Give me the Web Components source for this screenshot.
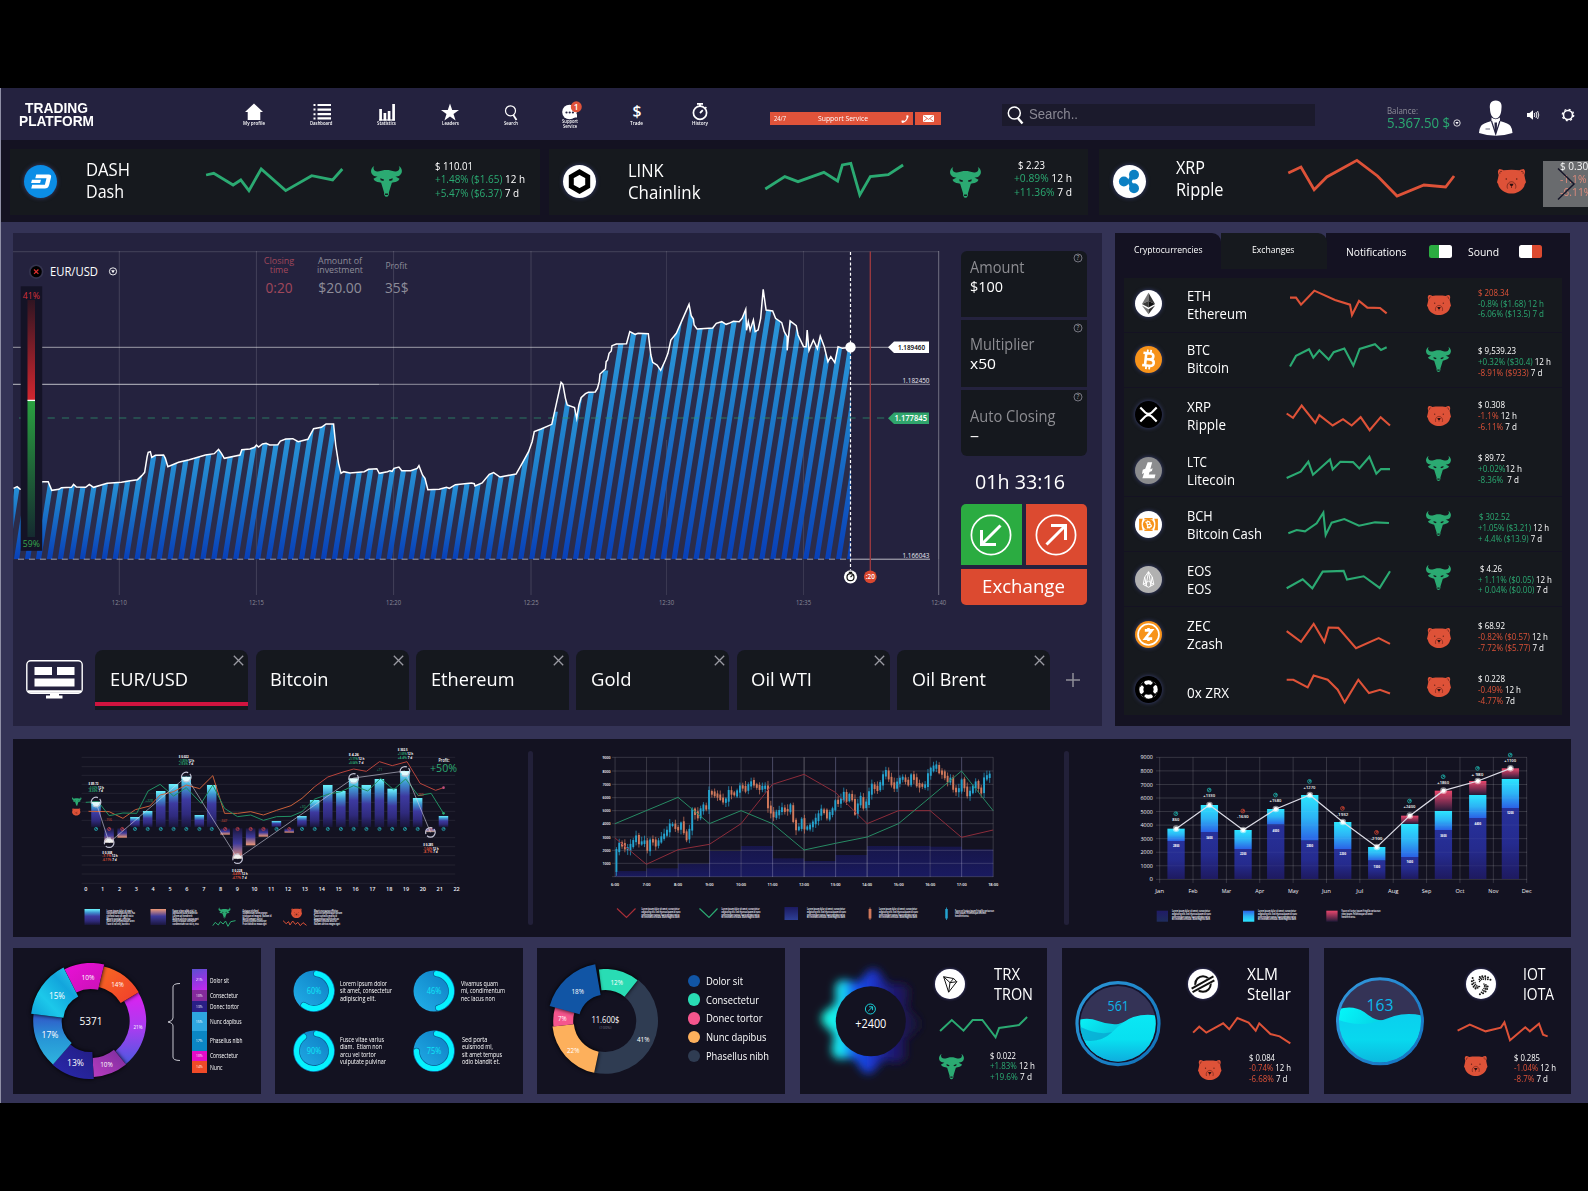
<!DOCTYPE html>
<html lang="en">
<head>
<meta charset="utf-8">
<title>Trading Platform</title>
<style>
html,body{margin:0;padding:0;background:#000}
body{font-family:"Open Sans","Noto Sans",sans-serif;color:#fff;width:1588px;height:1191px;overflow:hidden}
</style>
</head>
<body>
<trading-app></trading-app>
<script>
const G='#2baa72',R='#de5238',GREY='#8e8d99';
const BASE='*{box-sizing:border-box}svg{display:block;overflow:visible;flex:none}';
/* ---------- helpers ---------- */
const fit=(t,w,s,l,style='')=>`<fit-text w="${w}" s="${s}" l="${l}" style="${style}">${t}</fit-text>`;
const top_=(base,y0,s,l)=>(base-y0-(l/2+0.388*s)).toFixed(2);
const T=(x,y,t,s,w,fill='#fff',a='start',extra='')=>`<text x="${x}" y="${y}" font-size="${s}" fill="${fill}" text-anchor="${a}" ${w?`textLength="${w}" lengthAdjust="spacingAndGlyphs"`:''} ${extra}>${t}</text>`;
const pairs=s=>s.trim().split(/\s+/).map(p=>p.split(',').map(Number));
const mapper=(kx,ox,oy)=>(x,y)=>[+(ox+x/kx).toFixed(2),+(oy+y/3).toFixed(2)];
const line=(m,s,stroke,w=1,extra='')=>`<polyline points="${pairs(s).map(p=>m(...p).join(',')).join(' ')}" fill="none" stroke="${stroke}" stroke-width="${w}" ${extra}/>`;

const bull=(w,h,c=G,bg='#16191e')=>`<svg width="${w}" height="${h}" viewBox="0 0 30 31" preserveAspectRatio="none"><path fill="${c}" d="M3.2 0C1.6 2 2.6 5.2 6 5.4c2 .2 3.600-.6 5-.9 2.500-.6 5.500-.6 8 0 1.400.3 3 1.100 5 .9 3.400-.2 4.400-3.400 2.800-5.400 3.400 1.600 4.400 6.600 1.200 9.200-1.300 1-3 1.300-4.400 1.300l4 2.200c-.6 2.200-3.400 3.300-5.400 3.500l-2 .6-2.900 9.600c.4 1.800-.5 4.300-2.300 4.300s-2.700-2.500-2.300-4.300L9.800 16.800l-2-.6c-2-.2-4.800-1.300-5.400-3.500l4-2.200C5 10.500 3.300 10.200 2 9.200-1.200 6.600-.2 1.600 3.200 0z"/><path fill="${bg}" d="M9 12.200l3.600 1.400-.6 1.400-2.700-.8zM21 12.200l-3.600 1.400.6 1.400 2.700-.8zM13.600 27.500h2.800v1.500h-2.800z"/></svg>`;
const bear=(w,h,c=R,bg='#5b1f18')=>`<svg width="${w}" height="${h}" viewBox="0 0 30 25" preserveAspectRatio="none"><path fill="${c}" d="M2.600 0C4 .1 5.600.5 6.600 1.300 11.500.6 18.500.6 23.400 1.300 24.400.5 26 .1 27.400 0c2 1 2 3.600.9 6 .6 2.400.9 5 1.700 7.500-1 1.200-1.400 2.400-1.800 4C25.500 22.500 20 25 15 25S4.500 22.500 1.800 17.500C1.400 15.900 1 14.700 0 13.500.8 11 1.100 8.400 1.700 6 .6 3.600.6 1 2.600 0z"/><g fill="none" stroke="${bg}" stroke-width=".7"><path d="M3 5C2.500 3 3.500 1.800 5.200 2.600M27 5c.5-2-.5-3.200-2.200-2.400M11 20c-1.500-3 .5-7 4-7s5.500 4 4 7"/></g><path fill="#2a0f10" d="M12.800 15h4.400l-1.300 2.400h-1.800z"/><path fill="#2a0f10" d="M14.700 17.400h.6v2h-.6z"/><circle cx="9.600" cy="10.200" r=".8" fill="${bg}"/><circle cx="20.400" cy="10.200" r=".8" fill="${bg}"/></svg>`;
const animal=(k,w,h)=>k=='bull'?bull(w,h):bear(w,h);

const LOGO={
DASH:`<circle r="16.500" fill="#0b8de6"/><g transform="skewX(-14)"><path d="M-6-7H6.500Q9.500-7 9.500-4V3.500Q9.500 7 6 7H-7.500V3.200H5.200V-3.200H-6z" fill="#fff"/><path d="M-9-1.800H0V1.600H-9z" fill="#fff"/></g>`,
LINK:`<circle r="16.500" fill="#fff"/><path d="M0-9.500L8.200-4.800V4.800L0 9.500-8.200 4.800V-4.800z" fill="none" stroke="#000" stroke-width="5" stroke-linejoin="miter"/>`,
RIPPLE:`<circle r="16.500" fill="#fff"/><g fill="#0c80c3"><circle cx="-5.600" cy="0" r="5"/><circle cx="4.500" cy="-6.800" r="5"/><circle cx="4.500" cy="6.800" r="5"/></g><path d="M-5.600 0H0L3 -6M0 0L3 6" stroke="#0c80c3" stroke-width="4" fill="none"/>`,
ETH:`<circle r="16.500" fill="#fff"/><path d="M0-13L-8 .5 0-3z" fill="#777"/><path d="M0-13L8 .5 0-3z" fill="#333"/><path d="M0-3L-8 .5 0 5z" fill="#3c3c3b"/><path d="M0-3L8 .5 0 5z" fill="#111"/><path d="M-8 2.500L0 13V7z" fill="#777"/><path d="M8 2.500L0 13V7z" fill="#333"/>`,
BTC:`<circle r="16.500" fill="#f7931a"/><g transform="rotate(6)" fill="none" stroke="#fff"><path d="M-3.500-8V8M-7-7.500H1.500Q5.500-7.500 5.500-4T1.500-.3H-3.500M1.500-.3Q6.800-.3 6.800 3.700T1.500 7.500H-7" stroke-width="3.200"/><path d="M-2-12V-8M2-12V-8M-2 8V12M2 8V12" stroke-width="2.200"/></g>`,
XRP:`<circle r="16.500" fill="#000"/><g fill="none" stroke="#fff" stroke-width="2.600"><path d="M-10-8.500L-4-2.500Q0 1 4-2.500L10-8.500M-10 8.500L-4 2.500Q0-1 4 2.500L10 8.500"/></g>`,
LTC:`<circle r="16.500" fill="#8b8c8e"/><path d="M-1-10H4.500L2.200-1.500 5-2.700 4.200.6 1.300 1.800.4 5H8.500L7.400 9.500H-7.500L-5.400 3.200-8 4.200-7-.8-4-2z" fill="#fff"/>`,
BCH:`<circle r="16.500" fill="#fff"/><path d="M-11.500-7H-7Q-10 0-7 7H-11.500zM11.500-7H7Q10 0 7 7H11.500z" fill="#f7931a"/><circle r="6.800" fill="#f7931a"/><path d="M-5-7H5M-5 7H5" stroke="#f7931a" stroke-width="1.600"/><g transform="rotate(-14)" fill="none" stroke="#fff" stroke-width="1.500"><path d="M-1.500-3.500V3.500M-3-3.500H.6Q2.300-3.500 2.300-1.800T.6 0H-1.500M.6 0Q3 0 3 1.800T.6 3.500H-3M0-5V-3.500M0 3.500V5"/></g>`,
EOS:`<circle r="16.500" fill="#b1b1b1"/><g fill="none" stroke="#fff" stroke-width="1.200"><path d="M0-9.500L-4.600-3-6.500 6 0 9.500 6.500 6 4.600-3zM0-9.500L-3 7.500M0-9.500L3 7.500M-4.600-3L-2.500 8M4.600-3L2.500 8M-6.500 6L0 2 6.500 6"/></g>`,
ZEC:`<circle r="16.500" fill="#f7931a"/><circle r="12.800" fill="none" stroke="#fff" stroke-width="2"/><path d="M-4.500-5H4L-4 5H4.500M0-8V-5M0 5V8" fill="none" stroke="#fff" stroke-width="3.200"/>`,
ZRX:`<circle r="16.500" fill="#000"/><circle r="8.800" fill="none" stroke="#fff" stroke-width="5"/><g fill="#000"><circle r="5"/></g><path d="M-7.500-7.500L7.500 7.500M7.500-7.500L-7.500 7.500" stroke="#000" stroke-width="3.600"/><path d="M-10.500-3.500L-5-10M3.500-10.500L10-5M10.500 3.500L5 10M-3.500 10.500L-10 5" stroke="#000" stroke-width="1.300"/>`,
TRX:`<circle r="16.500" fill="#fff"/><path d="M-7-8L4-6 7.500-2.500-1.500 9zM-7-8L0-1.500-1.500 9M0-1.500L7.500-2.500M0-1.500L4-6" fill="none" stroke="#111" stroke-width="1.100"/>`,
XLM:`<circle r="16.500" fill="#fff"/><circle r="8.500" fill="none" stroke="#111" stroke-width="2.200"/><path d="M-12 7L12-6" stroke="#fff" stroke-width="7"/><path d="M-12.500 5L11.500-8.500M-11.500 9L12.500-4" stroke="#111" stroke-width="2.200"/>`,
IOT:`<circle r="16.500" fill="#fff"/><g fill="#151515">${(()=>{let s='';for(let a=0;a<3;a++)for(let j=0;j<3;j++)for(let i=0;i<5;i++){const t=a*2.094+i*.33+j*.18,r=3.200+j*2.300+i*.9;s+=`<circle cx="${(Math.cos(t)*r).toFixed(1)}" cy="${(Math.sin(t)*r).toFixed(1)}" r="${(.8+j*.16).toFixed(2)}"/>`}return s})()}</g>`};
const logo=(k,r)=>`<svg class="logo" width="${2*r}" height="${2*r}" viewBox="-16.500 -16.500 33 33">${LOGO[k]}</svg>`;
const caret=`<svg width="8" height="8" viewBox="-5 -5 10 10"><circle r="4" fill="none" stroke="#fff" stroke-width="1"/><path d="M-2-1.200H2L0 2z" fill="#fff"/></svg>`;
const g=t=>`<span style="color:${G}">${t}</span>`, r=t=>`<span style="color:${R}">${t}</span>`;

/* ---------- text stretched to a given run width ---------- */
customElements.define('fit-text',class extends HTMLElement{
 connectedCallback(){
  const w=+this.getAttribute('w'),s=this.getAttribute('s'),l=this.getAttribute('l');
  if(!this.shadowRoot){this.attachShadow({mode:'open'}).innerHTML=`<style>:host{display:block;flex:none;width:${w}px;height:${l}px;line-height:${l}px;font-size:${s}px;white-space:pre}span{display:inline-block;transform-origin:0 50%}</style><span><slot></slot></span>`;}
  const sp=this.shadowRoot.querySelector('span');const n=sp.getBoundingClientRect().width;
  if(n)sp.style.transform=`scaleX(${w/n})`;
 }});

/* ---------- one currency line: logo, name, sparkline, mood, prices ---------- */
const COINS={
dash:{o:[10,149],logo:'DASH',lc:[40.300,181.300,16.500],nx:86.200,names:[['DASH',44,175.700],['Dash',38,197.700]],ns:17.500,sp:[1.960,0,80,395,240,285,110,'403,285 418,280 456,315 471,300 487,332 511,267 559,332 610,287 651,300 670,267'],an:['bull',371.500,166,31,31],px:435.500,ps:10.500,prices:[['$ 110.01',38,170.700],[g('+1.48% ($1.65)')+' 12 h',90,183.900],[g('+5.47% ($6.37)')+' 7 d',84,197.500]]},
link:{o:[549,149],logo:'LINK',lc:[579.600,181.300,16.500],nx:628,names:[['LINK',35.500,176.700],['Chainlink',72.500,198.700]],ns:17.500,sp:[1.894,760,80,0,240,285,110,'10,327 47,290 72,305 121,277 147,303 156,255 172,250 189,345 209,290 243,284 271,255'],an:['bull',950,167,31,31],px:1014.500,ps:10.500,prices:[['$ 2.23',27,169.800,3.500],[g('+0.89%')+' 12 h',58,183],[g('+11.36%')+' 7 d',58,196.700]]},
rip:{o:[1099,149],logo:'RIPPLE',lc:[1129,181.300,16.500],nx:1176.300,names:[['XRP',29,175],['Ripple',47.500,196.900]],ns:17.500,sp:[1.894,760,80,990,230,335,125,'1000,278 1024,260 1049,328 1073,290 1130,240 1169,287 1206,347 1257,314 1298,320 1314,287'],an:['bear',1497.500,169.300,29,24.500],px:1560,ps:10.500,prices:[['$ 0.308',34,170.300],[r('-1.1%')+' 12 h',50,183.300],[r('-6.11%')+' 7 d',50,197]]}};
const row=(i,logoK,lcy,names,c,pts,an,prices)=>{const y0=278+54.75*i,oy=i<4?225:470;return{o:[1124,y0],logo:logoK,lc:[1149,lcy,13.500],nx:1187,names,ns:15,sp:[3,1105,oy,537,(y0-oy)*3,324,164,pts],an:[an[0],1439.300-(an[0]=='bull'?12.500:12),an[1],an[0]=='bull'?25:24,an[0]=='bull'?25.300:20],px:1478.700,ps:9,prices}};
COINS.r0=row(0,'ETH',303.300,[['ETH',24,301],['Ethereum',60,319]],R,'555,218 573,218 588,239 628,197 690,225 735,239 741,270 762,228 787,248 825,249 845,265',['bear',295.300],[[r('$ 208.34'),31,296.700],[g('-0.8% ($1.68) 12 h'),66,307.500],[g('-6.06% ($13.5) 7 d'),66,318.300]]);
COINS.r1=row(1,'BTC',359.300,[['BTC',23,355.300],['Bitcoin',42,373.300]],G,'555,424 573,392 612,372 625,397 643,375 671,403 686,381 718,370 745,421 764,371 810,357 828,374 845,366',['bull',346.700],[['$ 9,539.23',38,355.400],[g('+0.32% ($30.4)')+' 12 h',73,366.300],[r('-8.91% ($933)')+' 7 d',64.500,377.200]]);
COINS.r2=row(2,'XRP',414.500,[['XRP',24,412.300],['Ripple',39,430.300]],R,'545,564 564,577 590,540 631,592 643,569 683,600 714,581 740,600 767,575 794,614 827,575 855,600',['bear',406.300],[['$ 0.308',27,408.700],[r('-1.1%')+' 12 h',39,419.600],[r('-6.11%')+' 7 d',39,430.500]]);
COINS.r3=row(3,'LTC',470.700,[['LTC',20,467.200],['Litecoin',48,485.200]],G,'545,760 587,741 610,711 624,750 675,704 683,734 706,711 744,712 763,731 793,696 814,747 828,733 855,733',['bull',455.700],[['$ 89.72',27,462.300],[g('+0.02%')+'12 h',44,473.300],[g('-8.36%')+'  7 d',41,484.100]]);
COINS.r4=row(4,'BCH',524.500,[['BCH',25.700,521.300],['Bitcoin Cash',75,539.300]],G,'550,190 575,180 600,184 635,160 655,128 662,195 680,158 718,147 762,167 810,157 852,159',['bull',511.300],[[g('$ 302.52'),31,521.200,.7],[g('+1.05% ($3.21)')+' 12 h',71,532.100],[g('+ 4.4% ($13.9)')+' 7 d',64,542.900]]);
COINS.r5=row(5,'EOS',579.300,[['EOS',24.500,576],['EOS',24.500,594]],G,'545,354 593,327 622,354 653,304 716,302 726,328 776,318 824,353 855,303',['bull',564.700],[['$ 4.26',22,572.600,1.700],[g('+ 1.11% ($0.05)')+' 12 h',74,583.600],[g('+ 0.04% ($0.00)')+' 7 d',70,594.400]]);
COINS.r6=row(6,'ZEC',634.300,[['ZEC',23.700,631],['Zcash',36,649]],R,'545,482 588,514 626,460 658,514 671,471 700,472 753,533 821,503 855,520',['bear',628],[['$ 68.92',27,630.300],[r('-0.82% ($0.57)')+' 12 h',70,641.200],[r('-7.72% ($5.77)')+' 7 d',66,652]]);
COINS.r7=row(7,'ZRX',689.300,[['0x ZRX',42,697.600]],R,'545,630 565,630 608,653 626,617 668,630 698,660 719,698 760,630 792,670 825,660 855,671',['bear',677],[['$ 0.228',27,683.100],[r('-0.49%')+' 12 h',43,694],[r('-4.77%')+' 7d',37,704.800]]);
const spark=(sp,col,w,style='')=>`<svg class="spark" style="${style}" width="${(sp[5]/sp[0]).toFixed(2)}" height="${(sp[6]/3).toFixed(2)}" viewBox="${sp[3]} ${sp[4]} ${sp[5]} ${sp[6]}" preserveAspectRatio="none"><polyline points="${sp[7]}" fill="none" stroke="${col}" stroke-width="${w}" vector-effect="non-scaling-stroke"/></svg>`;
customElements.define('coin-line',class extends HTMLElement{
 connectedCallback(){
  const d=COINS[this.getAttribute('coin')],[ox,oy]=d.o,[lx,ly,lr]=d.lc;
  const xs=[lx-lr,d.nx,d.sp[1]+d.sp[3]/d.sp[0],d.an[1],d.px];
  const cols=xs.slice(0,4).map((x,i)=>(xs[i+1]-x).toFixed(2)+'px').join(' ')+' auto';
  const nl=d.names.length>1?d.names[1][2]-d.names[0][2]:18, pl=(d.prices[2][2]-d.prices[0][2])/2;
  const col=d.an[0]=='bull'?G:R;
  this.attachShadow({mode:'open'}).innerHTML=`<style>${BASE}
  :host{display:grid;grid-template-columns:${cols};align-items:start;padding-left:${(xs[0]-ox).toFixed(2)}px;background:#16191e;overflow:hidden}
  .logo{filter:drop-shadow(0 0 2px rgba(90,100,190,.55))}</style>
  <div style="margin-top:${(ly-lr-oy).toFixed(2)}px">${logo(d.logo,lr)}</div>
  <div style="margin-top:${top_(d.names[0][2],oy,d.ns,nl)}px">${d.names.map(n=>fit(n[0],n[1],d.ns,nl)).join('')}</div>
  <div style="margin-top:${(d.sp[2]+d.sp[4]/3-oy).toFixed(2)}px">${spark(d.sp,col,lr>15?2.800:2.100)}</div>
  <div style="margin-top:${d.an[2]-oy}px">${animal(d.an[0],d.an[3],d.an[4])}</div>
  <div style="margin-top:${top_(d.prices[0][2],oy,d.ps,pl)}px">${d.prices.map(p=>fit(p[0],p[1],d.ps,pl,p[3]?`margin-left:${p[3]}px`:'')).join('')}</div>`;
 }});

/* ---------- header ---------- */
const NAV=[
 [234,'<path d="M20 15.500L29 24H26.300V32H13.700V24H11z" fill="#fff"/>',[['My profile',22]],126],
 [302,'<path d="M15.500 17H29M15.500 21.600H29M15.500 26.200H29M15.500 30.400H29" stroke="#fff" stroke-width="2.200"/><path d="M11.500 17H13.500M11.500 21.600H13.500M11.500 26.200H13.500M11.500 30.400H13.500" stroke="#fff" stroke-width="2"/>',[['Dashboard',22.500]],126],
 [367,'<path d="M13.600 21V32.500M17.900 25V32.500M22.100 23V32.500M26.600 16V32.500" stroke="#fff" stroke-width="2.700"/><path d="M12 32H28" stroke="#fff" stroke-width="1.200"/>',[['Statistics',19]],126],
 [430.500,'<path d="M20 15.500L22.200 22H29L23.500 26 25.600 32.500 20 28.500 14.400 32.500 16.500 26 11 22H17.800z" fill="#fff"/>',[['Leaders',17]],126],
 [491,'<circle cx="19.500" cy="22.800" r="5" fill="none" stroke="#fff" stroke-width="1.200"/><path d="M22.300 27L25.500 32" stroke="#fff" stroke-width="1.800"/>',[['Search',14]],125.700],
 [550.500,'<circle cx="19.500" cy="24" r="7.300" fill="#fff"/><path d="M14 29.500H27V26z" fill="#fff"/><g fill="#24223f"><circle cx="16.500" cy="24.500" r="1.100"/><circle cx="19.700" cy="24.500" r="1.100"/><circle cx="22.900" cy="24.500" r="1.100"/></g><circle cx="26.300" cy="18.800" r="5.500" fill="#e0533a"/>'+T(26.300,21.900,'1',8.500,0,'#fff','middle'),[['Support',16],['Service',14]],123.300],
 [617,T(20,28.800,'$',16.300,9,'#fff','middle'),[['Trade',13]],125.600],
 [680.500,'<circle cx="20" cy="24.800" r="6.600" fill="none" stroke="#fff" stroke-width="1.700"/><path d="M17 15.800H23M20 16V18.500M25.200 19.200L26.300 20.300M20 25L22.800 22.200" stroke="#fff" stroke-width="1.800"/>',[['History',16]],125.700]];
customElements.define('top-bar',class extends HTMLElement{
 connectedCallback(){
  let px=0;
  const nav=NAV.map((n,i)=>{const m=i?n[0]-px:0;px=n[0]+40;return `<div class="item" style="margin-left:${m}px"><svg width="40" height="32" viewBox="0 0 40 32">${n[1]}</svg><div style="margin-top:${top_(n[3],120,5.600,5.200)}px">${n[2].map(l=>fit(l[0],l[1],5.600,5.200,'margin:0 auto')).join('')}</div></div>`}).join('');
  this.attachShadow({mode:'open'}).innerHTML=`<style>${BASE}
  :host{display:flex;height:52px;background:#24223f;align-items:flex-start;box-shadow:inset 1px 0 #8f8fa6}
  .brand{margin:14.200px 0 0 19px;width:75px;font-family:"Liberation Sans",sans-serif;font-weight:700}
  .brand fit-text{margin:0 auto}
  nav{display:flex;margin-left:139.500px;font-weight:600}.item{width:40px}
  .sup{display:flex;gap:2.800px;margin:24px 0 0 49.500px}
  .sup>div{background:#e0533a;height:13px;display:flex;align-items:center}
  .a{width:143px;padding:0 4px;justify-content:space-between}.b{width:26.200px;justify-content:center}
  .search{display:flex;align-items:center;margin:15.500px 0 0 61px;width:313px;height:22.500px;background:#1b1a2c;padding-left:5px;gap:4.500px;color:#8a8994;font-family:"Liberation Sans",sans-serif}
  .search fit-text{margin-top:-1px}
  .bal{margin:16.500px 0 0 71.500px;width:77px}.amt{display:flex;align-items:center;gap:3.500px;color:${G}}.amt fit-text{margin-top:-1px}
  </style>
  <div class="brand">${fit('TRADING',63,14,12.400)}${fit('PLATFORM',75,14,12.400)}</div>
  <nav>${nav}</nav>
  <div class="sup"><div class="a">${fit('24/7',12,7,9)}${fit('Support Service',50,7.500,9)}<svg width="8" height="8" viewBox="0 0 8 8"><path d="M1 7C4 7 6 5 6.600 1.500" stroke="#fff" stroke-width="1.300" fill="none"/><path d="M.6 6.800L2.800 6.200M5.400 1.600L7.400 1.300" stroke="#fff" stroke-width="2"/></svg></div>
  <div class="b"><svg width="11" height="7" viewBox="0 0 11 7"><rect width="11" height="7" rx=".8" fill="#fff"/><path d="M.8.8L5.500 4.400 10.200.8M.8 6.200L4 3.600M10.200 6.200L7 3.600" stroke="#e0533a" stroke-width=".8" fill="none"/></svg></div></div>
  <div class="search"><svg width="17" height="20" viewBox="0 0 17 20"><circle cx="7.300" cy="8" r="6" fill="none" stroke="#fff" stroke-width="1.500"/><path d="M10.800 13L15.500 18.500" stroke="#fff" stroke-width="2.400"/></svg>${fit('Search..',49,14,18)}</div>
  <div class="bal"><div style="color:${GREY}">${fit('Balance:',31,9,11)}</div><div class="amt">${fit('5.367.50 $',63,14.800,15)}${caret}</div></div>
  <svg width="33.500" height="36" viewBox="0 0 33.500 36" style="margin:11.500px 0 0 15.200px"><path d="M16.700.5C11.500.5 10.300 4.500 11 9c0 5 2.400 9.500 5.700 9.500S22.400 14 22.400 9C23.200 4.500 22 .5 16.700.5z" fill="#fff"/><path d="M12.500 17.500Q16.700 21 20.900 17.500V21Q30 23.500 31.500 26 33.500 29 33.500 33 25 35.800 16.700 35.800T0 33Q0 29 2 26 3.500 23.500 12.500 21z" fill="#fff"/><path d="M12.500 21L16.700 34 20.900 21" fill="none" stroke="#24223f" stroke-width="1.200"/><path d="M15.500 22.500H18L17.800 31 16.700 33 15.600 31z" fill="#24223f"/><path d="M6.500 29H11" stroke="#24223f" stroke-width=".7"/></svg>
  <svg width="13" height="10" viewBox="0 0 13 10" style="margin:22.300px 0 0 14.500px"><path d="M0 3H2.500L6 .3V9.700L2.500 7H0z" fill="#fff"/><path d="M7.300 3Q8.300 5 7.300 7M9 2Q10.700 5 9 8M10.600 1Q13 5 10.600 9" stroke="#fff" stroke-width=".9" fill="none"/></svg>
  <svg width="14" height="14" viewBox="-7 -7 14 14" style="margin:20px 0 0 21px"><circle r="4.500" fill="none" stroke="#fff" stroke-width="1.600"/><circle r="5.700" fill="none" stroke="#fff" stroke-width="1.300" stroke-dasharray="2 2.480"/></svg>`;
 }});

customElements.define('ticker-strip',class extends HTMLElement{
 connectedCallback(){this.attachShadow({mode:'open'}).innerHTML=`<style>${BASE}
 :host{display:flex;height:82px;background:#141222;padding:9px 0 0 10px;position:relative;overflow:hidden;box-shadow:inset 1px 0 #8f8fa6}
 coin-line{height:66px;flex:none}
 .next{position:absolute;right:0;top:21px;width:45px;height:46px;background:rgba(230,230,230,.4)}</style>
 <coin-line coin="dash" style="width:530px"></coin-line><coin-line coin="link" style="width:538.500px;margin-left:9px"></coin-line><coin-line coin="rip" style="width:489px;margin-left:11.500px"></coin-line>
 <div class="next"><svg width="45" height="46" viewBox="0 0 45 46"><path d="M15 7.500L31 23 15 38.500" fill="none" stroke="#17162a" stroke-width="1.500"/></svg></div>`}});

/* ---------- price area chart ---------- */
customElements.define('price-chart',class extends HTMLElement{
 connectedCallback(){
  const A=mapper(2.8,0,225),B=mapper(2.751,540,225);
  const pts=[...pairs('38,790 48,785 57,793 90,793 112,772 118,770 135,770 145,796 165,793 172,788 200,787 206,778 214,786 240,787 250,778 262,787 300,775 340,772 360,768 385,764 397,752 405,742 412,695 415,682 421,680 425,697 435,691 458,690 463,700 470,725 500,712 530,704 575,690 600,686 612,673 620,685 628,700 672,690 677,674 700,672 713,667 718,660 724,666 735,657 745,655 755,660 778,659 785,648 800,642 820,641 835,650 862,643 878,611 900,607 913,597 934,597 940,660 948,715 955,745 962,740 980,744 1020,740 1032,733 1055,731 1062,745 1085,740 1092,737 1098,739 1103,730 1117,726 1125,737 1150,737 1168,730 1173,722 1183,750 1190,760 1198,794 1230,793 1250,787 1258,790 1275,779 1320,774 1328,776 1330,783 1350,774 1370,748 1382,743 1400,756 1445,747 1462,715 1480,680 1490,650 1496,620 1515,612 1545,598').map(p=>A(...p)),
  ...pairs('58,472 63,478 70,520 75,540 95,548 101,580 107,540 113,518 125,506 133,502 152,501 158,490 163,470 165,447 180,432 182,410 186,405 190,385 196,378 198,362 210,357 238,356 247,320 262,328 270,325 298,326 305,390 310,412 322,420 332,436 345,405 352,385 360,345 375,325 410,238 416,272 422,282 424,300 432,312 475,309 485,295 500,290 512,298 520,295 532,289 548,290 556,280 566,253 568,316 573,290 578,316 587,285 592,320 600,315 607,280 614,193 622,255 640,258 648,280 665,293 672,320 680,335 680,376 688,288 705,302 710,330 725,365 732,365 735,315 740,376 752,345 763,371 771,333 782,365 792,410 800,395 811,413 820,365 832,370 855,367').map(p=>B(...p))];
  const poly=pts.map(p=>p.join(',')).join(' ');
  const yAt=x=>{for(let i=1;i<pts.length;i++)if(pts[i][0]>=x){const[a,b]=[pts[i-1],pts[i]];return a[1]+(b[1]-a[1])*(x-a[0])/((b[0]-a[0])||1)}return pts.at(-1)[1]};
  let st='';const S=.16;
  for(let i=-3;i<80;i++){const x=15.300+i*10.960;if(x>856)break;
   let t=Math.min(yAt(Math.max(x,14)),yAt(Math.max(x+(559-yAt(Math.max(x,14)))*S,14)));t-=14;const dx=(559-t)*S;
   st+=`<path d="M${x-1.300} 559L${x-1.300+dx} ${t}h5.200L${x+3.900} 559z" fill="url(#sg)"/>`}
  const vx=[[119.300,.14],[256.400,.14],[393.600,.14],[531,.14],[666.500,.1],[803.500,.1],[938.700,.35]];
  const lb=['12:10','12:15','12:20','12:25','12:30','12:35','12:40'];
  const sv=`<svg width="940" height="393" viewBox="13 233 940 393"><defs><linearGradient id="sg" x2="0" y2="1"><stop offset="0" stop-color="#2e9bdc"/><stop offset=".35" stop-color="#1f80cc"/><stop offset="1" stop-color="#0840b8"/></linearGradient><linearGradient id="rd" x2="0" y2="1"><stop stop-color="#301522"/><stop offset="1" stop-color="#d0262f"/></linearGradient><linearGradient id="gn" x2="0" y2="1"><stop stop-color="#2aa040"/><stop offset="1" stop-color="#152a30"/></linearGradient>
  <clipPath id="ar"><polygon points="${poly} 850.500,559.500 13,559.500"/></clipPath></defs>
  ${vx.map(v=>`<path d="M${v[0]} 251V595" stroke="#fff" stroke-opacity="${v[1]}"/>`).join('')}
  <path d="M13 251.700H938.700" stroke="#fff" stroke-opacity=".15"/>
  <path d="M13 347.300H892" stroke="#fff" stroke-opacity=".55"/>
  <path d="M13 384.300H379" stroke="#fff" stroke-opacity=".7"/><path d="M379 384.300H930" stroke="#fff" stroke-opacity=".5"/>
  <polygon points="${poly} 850.500,559.500 13,559.500" fill="#2b2c4a"/>
  ${vx.map(v=>`<path d="M${v[0]} 440V559" stroke="#fff" stroke-opacity=".1"/>`).join('')}
  <g clip-path="url(#ar)">${st}<path d="M560 347.300H850M560 384.300H850" stroke="#fff" stroke-opacity=".3"/></g>
  <path d="M19 418H888" stroke="#2f9a70" stroke-opacity=".7" stroke-dasharray="7.200 7.100" stroke-width="1.200"/>
  <polyline points="${poly}" fill="none" stroke="#fff" stroke-width="1.500" stroke-linejoin="miter" stroke-miterlimit="6"/>
  <path d="M850 559.200H930" stroke="#fff" stroke-opacity=".7"/><path d="M18 559.200H850" stroke="#fff" stroke-opacity=".55" stroke-dasharray="6 4.960"/>
  <path d="M870.300 251.500V571" stroke="#a03a3f" stroke-width="1.300"/>
  <path d="M850.500 252V570" stroke="#fff" stroke-width="1.200" stroke-dasharray="3 2.200"/>
  <circle cx="850.500" cy="347.300" r="5.200" fill="#fff"/>
  <circle cx="850.500" cy="576.800" r="6.600" fill="#fff"/><circle cx="850.500" cy="577.200" r="3.500" fill="none" stroke="#111" stroke-width="1.200"/><path d="M848.800 572.300H852.200M850.500 577.200L852.500 575.200" stroke="#111" stroke-width="1.200"/>
  <circle cx="870.300" cy="576.800" r="6.400" fill="#d9472f"/>${T(870.300,579.200,':20',6.500,9,'#fff','middle','font-weight="600"')}
  <path d="M888 347.300L894 341.600H929V353H894z" fill="#fff"/>${T(898,350,'1.189460',7.500,27,'#000','start','font-weight="600"')}
  <path d="M888 418.200L894 412.500H929V424H894z" fill="#2fa56c"/>${T(894.500,421,'1.177845',8,32.500,'#fff','start','font-weight="600"')}
  ${T(902.500,383.300,'1.182450',7.500,27,'#e8e8f0')}${T(902.500,558,'1.166043',7.500,27,'#e8e8f0')}
  ${lb.map((t,i)=>T(vx[i][0],604.500,t,7,15,'#8a8a98','middle')).join('')}
  <rect x="20.700" y="286.300" width="21.500" height="264.500" fill="#141326"/><rect x="27.500" y="300" width="7.500" height="100" fill="url(#rd)"/><rect x="27.500" y="400" width="7.500" height="137" fill="url(#gn)"/><path d="M27.500 400.400H35" stroke="#fff" stroke-width="1.300"/>
  ${T(31.300,298.500,'41%',8.500,17,'#d8303a','middle')}${T(31.300,547.300,'59%',8.500,17,'#35a84c','middle')}
  <circle cx="36.200" cy="271.700" r="7.200" fill="#35344f"/><circle cx="36.200" cy="271.700" r="5.600" fill="#000"/><path d="M34 269.500L38.400 273.900M38.400 269.500L34 273.900" stroke="#e03030" stroke-width="1.200"/>
  ${T(50,275.500,'EUR/USD',12,48,'#fff','start')}<g transform="translate(113 271.400) scale(.9)"><circle r="4" fill="none" stroke="#fff"/><path d="M-2-1.200H2L0 2z" fill="#fff"/></g>
  ${T(279,264.200,'Closing',9.300,30.500,'#a0475b','middle')}${T(279,273,'time',9.300,18.500,'#a0475b','middle')}${T(279,292.800,'0:20',14.500,27,'#a0475b','middle')}
  ${T(340,264.200,'Amount of',9.300,44,GREY,'middle')}${T(340,273,'investment',9.300,46,GREY,'middle')}${T(340,292.800,'$20.00',14.500,43.500,GREY,'middle')}
  ${T(385.400,268.500,'Profit',9.300,22,GREY)}${T(385,292.800,'35$',14.500,23.500,GREY)}</svg>`;
  this.attachShadow({mode:'open'}).innerHTML=`<style>${BASE}:host{display:block}</style>${sv}`;
 }});

customElements.define('trade-controls',class extends HTMLElement{
 connectedCallback(){
  const q=`<svg width="10" height="10" viewBox="-5 -5 10 10"><circle r="4" fill="none" stroke="#8e8d99" stroke-width=".8"/>${T(0,2.400,'?',6.500,0,'#aaa','middle')}</svg>`;
  const box=(y,a,aw,ab,b,bw,bb)=>`<div class="box"><div><div style="margin-top:${top_(ab+.8,y,15.500,19)}px;color:#8d8d92">${fit(a,aw,15.500,19)}</div>${fit(b,bw,15,19,`margin-top:${(bb-ab-19-.4).toFixed(1)}px`)}</div>${q}</div>`;
  const arr=d=>`<svg width="42" height="42" viewBox="-21 -21 42 42"><circle r="19.600" fill="none" stroke="#fff" stroke-width="1.700"/><g transform="rotate(${d})"><path d="M-9.500 9.500L9 -9M-5-9.500H9.500V5" fill="none" stroke="#fff" stroke-width="3"/></g></svg>`;
  this.attachShadow({mode:'open'}).innerHTML=`<style>${BASE}
  :host{display:flex;flex-direction:column;width:126px}
  .boxes{display:grid;gap:3px;border-radius:6px;overflow:hidden}
  .box{height:66.300px;background:#15181e;padding:0 4px 0 8.700px;display:flex;justify-content:space-between}.box>svg{margin-top:2.300px}
  .btns{display:grid;grid-template-columns:1fr 1fr;gap:4px;margin-top:10.300px}.btns>div{height:61.300px;display:grid;place-items:center}
  .g{background:#2bac41;border-radius:5px 0 0 0}.r{background:#dc4a30;border-radius:0 5px 0 0}
  .ex{margin-top:3.200px;height:36.500px;background:#dc4a30;border-radius:0 0 5px 5px;display:flex;justify-content:center;align-items:center}</style>
  <div class="boxes">${box(251,'Amount',54.500,273,'$100',33,292)}${box(320.300,'Multiplier',64.500,350,'x50',26,369.500)}${box(389.600,'Auto Closing',85.500,421.700,'–',9,441)}</div>
  ${fit('01h 33:16',90,20.800,26,'margin:'+top_(489,456,21,26)+'px 0 0 14.300px')}
  <div class="btns"><div class="g">${arr(180)}</div><div class="r">${arr(0)}</div></div>
  <div class="ex">${fit('Exchange',83,18.500,24,'margin-top:-2.500px')}</div>`;
 }});

customElements.define('market-tab',class extends HTMLElement{
 connectedCallback(){const w=this.getAttribute('w');this.attachShadow({mode:'open'}).innerHTML=`<style>${BASE}
 :host{display:flex;flex-direction:column;width:153px;height:60px;background:#15181e;border-radius:8px 8px 0 0;flex:none}
 .t{display:flex;justify-content:space-between;height:52px;padding:0 4.500px 0 14.800px}.u{height:4px}:host([active]) .u{background:#d0143f}</style>
 <div class="t"><fit-text w="${w}" s="19" l="26" style="margin-top:15.600px"><slot></slot></fit-text><svg width="11" height="11" viewBox="0 0 11 11" style="margin-top:4.700px"><path d="M.8.8L10.200 10.200M10.200.8L.8 10.200" stroke="#9a9aa2" stroke-width="1.300"/></svg></div><div class="u"></div>`}});

customElements.define('main-panel',class extends HTMLElement{
 connectedCallback(){const tabs=[['EUR/USD',78],['Bitcoin',58.500],['Ethereum',83.500],['Gold',40.500],['Oil WTI',61],['Oil Brent',74]];
 this.attachShadow({mode:'open'}).innerHTML=`<style>${BASE}
 :host{display:block;width:1088.300px;height:493px;background:#24223e}
 .top{display:flex}trade-controls{margin:18px 0 0 7.700px}.tabs{display:flex;gap:7.300px;margin-top:24px;padding-left:12.700px;align-items:flex-start}</style>
 <div class="top"><price-chart></price-chart><trade-controls></trade-controls></div>
 <div class="tabs"><svg width="57" height="39" viewBox="0 0 57 39" style="margin:9.500px 5.100px 0 0"><rect x=".8" y=".8" width="55.400" height="32.400" rx="4" fill="none" stroke="#fff" stroke-width="1.400"/><path d="M2 31.500H55" stroke="#fff" stroke-width="2.500"/><path d="M8.500 7H26V15H8.500zM31 7H48.500V15H31zM8.500 18.500H48.500V26.500H8.500zM24 33H33V35.500H36.500V38.500H20V35.500H24z" fill="#fff"/></svg>
 ${tabs.map((t,i)=>`<market-tab w="${t[1]}" ${i?'':'active'}>${t[0]}</market-tab>`).join('')}
 <svg width="14" height="14" viewBox="0 0 14 14" style="margin:23.300px 0 0 9px"><path d="M7 0V14M0 7H14" stroke="#8e8e98" stroke-width="1.500"/></svg></div>`}});

customElements.define('coin-list',class extends HTMLElement{
 connectedCallback(){this.attachShadow({mode:'open'}).innerHTML=`<style>${BASE}
 :host{display:block;width:455.200px;height:493px;background:#141222}
 header{display:flex;height:45px;align-items:flex-start;background:linear-gradient(#343356,#343356) 0 0/106px 11px no-repeat,linear-gradient(#343356,#343356) 106px 0/105px 11px no-repeat}
 .t{height:36px;padding-top:9.700px}.t1{width:105.500px;padding-left:18.800px;background:#141222;border-radius:0 9px 0 0}.t2{width:106px;padding-left:31.500px;background:#16191e;border-radius:0 9px 0 0}
 .sw{display:flex;width:23px;height:13px;border-radius:2.500px;overflow:hidden;margin-top:12.300px}.sw i{flex:1}
 main{display:grid;grid-auto-rows:54px;gap:.75px;padding:0 8.500px}main coin-line{width:438px;height:54px;overflow:visible}</style>
 <header><div class="t t1">${fit('Cryptocurrencies',68.500,9.500,13)}</div><div class="t t2">${fit('Exchanges',42.500,9.500,13)}</div>
 ${fit('Notifications',60.500,11,14,'margin:11.500px 0 0 19.500px')}<div class="sw" style="margin-left:22.300px"><i style="background:#2bac41;flex:.85"></i><i style="background:#fff"></i></div>${fit('Sound',31,11,14,'margin:11.500px 0 0 16.300px')}<div class="sw" style="margin-left:20.300px"><i style="background:#fff;flex:1.200"></i><i style="background:#dc4a30"></i></div></header>
 <main>${[0,1,2,3,4,5,6,7].map(i=>`<coin-line coin="r${i}"></coin-line>`).join('')}</main>`}});

/* ---------- three analytics charts ---------- */
const fine=(x,y,lines,lh=3)=>lines.map((t,i)=>T(x,y+i*lh,t[0],2.700,t[1],'#e4e4ee','start','font-weight="700"')).join('');
const lor=[['Lorem ipsum dolor sit amet, consectetur',38],['adipiscing elit. Sed rhoncus quam id nunc',39],['pellentesque cursus. Fusce egestas varius',38],['at venenatis vehicula. Morbi sagittis diam',38]];
const shortLor=[['Fusce vel tortor ipsum fringilla varius non',39],['vitae ipsum. Pellentesque sit amet',31],['hendrerit arcu.',14]];
const arrowDot=(x,y,c,s=1)=>`<g transform="translate(${x} ${y}) scale(${s})" stroke="${c}" fill="none" stroke-width=".8"><circle r="2"/><path d="M-.9.9L.9-.9M-.4-1H1V.4"/></g>`;
function chartA(){
 const m=mapper(2.904,0,735);let s='';
 [67,95,121,148,175,202,229,256,308,335,362,390,417,445].forEach(y=>{const a=m(237,y),b=m(1322,y);s+=`<path d="M${a}H${b[0]}" stroke="#fff" stroke-opacity=".075"/>`});
 const bars='279,200 317,-322 355,-308 392,246 429,228 467,168 504,147 541,125 579,240 615,150 654,-299 690,-370 728,-331 765,-305 803,258 840,-293 877,243 914,195 952,150 990,168 1027,131 1064,150 1102,132 1139,161 1176,108 1213,189 1250,-290 1288,243';
 pairs(bars).forEach(([x,v])=>{const neg=v<0,[a,t]=m(x-14,neg?280:v),[,b]=m(0,neg?-v:276);s+=`<rect x="${a}" y="${t}" width="9.500" height="${(b-t).toFixed(1)}" fill="url(#${neg?'bn':'bp'})"/>`;const q=m(x,282);s+=arrowDot(q[0],q[1],neg?'#d0454a':'#25b5c0',.8)});
 s+=line(m,'257,229 317,230 357,250 393,224 435,213 465,180 504,170 541,150 580,161 618,122 652,235 690,235 728,230 765,240 803,226 845,212 877,190 914,155','#c9603a',1,'')+line(m,'914,155 952,126 990,113 1027,102 1064,109 1102,80 1139,92 1182,80 1220,145 1265,166 1288,158','#b8443c',1);
 s+=line(m,'249,202 285,200 317,242 357,234 397,235 430,168 465,148 504,183 541,158 584,205 618,150 652,220 690,245 728,240 765,256 803,245 845,244 877,230 914,192 952,178 990,170 1027,152 1068,168 1105,130 1143,164 1178,132 1215,182 1252,175 1288,235','#219063',1);
 s+=line(m,'279,202 317,323 541,125 690,371 1027,129 1176,108 1250,292','#d4d4e4',.8,'stroke-opacity=".75"');
 pairs('279,201 317,323 541,126 690,371 1027,130 1176,109 1250,292').forEach((p,i)=>{const q=m(...p),neg=[1,3,6].includes(i);s+=`<circle cx="${q[0]}" cy="${q[1]}" r="4.800" fill="none" stroke="#c4c4d6" stroke-width="1.200" stroke-dasharray="11 2"/><path d="${neg?`M${q[0]-4.200} ${q[1]}A4.200 4.200 0 0 1 ${q[0]+4.200} ${q[1]}z`:`M${q[0]-4.200} ${q[1]}A4.200 4.200 0 0 0 ${q[0]+4.200} ${q[1]}z`}" fill="#f4ffff" fill-opacity="${i==6?.3:.85}"/>`});
 for(let i=0;i<=22;i++){const q=m(249+i*48.950,469);s+=T(q[0],q[1],i,5.500,0,'#f0f0f6','middle','font-weight="600"')}
 const tip=(x,y,a,b,c,col)=>{const q=m(x,y);const w='font-weight="700"';return T(q[0],q[1]+1,a,3,10,'#fff','start',w)+T(q[0],q[1]+4.600,b,3,9,col,'start',w)+T(q[0]+9.500,q[1]+4.600,'12 h',3,6,'#fff','start',w)+T(q[0],q[1]+8.200,c,3,9,col,'start',w)+T(q[0]+10,q[1]+8.200,'7 d',3,4.500,'#fff','start',w)};
 s+=tip(257,147,'$ 89.72','+0.02%','-8.36%',G)+tip(519,66,'$ 0.022','+1.83%','+19.6%',G)+tip(1013,61,'$ 4.26','+1.11%','+0.04%',G)+tip(1155,46,'$ 302.5','+1.05%','+4.4%',G)+tip(297,353,'$ 0.308','-1.1%','-6.11%',R)+tip(674,407,'$ 0.228','-0.49%','-4.77%',R)+tip(1229,330,'$ 0.285','-1.04%','-8.7%',R);
 [[433,202,'+228',G],[315,257,'-156',R],[650,260,'-347',R],[879,219,'+30',G],[1102,108,'+71',G],[1220,184,'-260',R]].forEach(a=>{const q=m(a[0],a[1]);s+=T(q[0],q[1],a[2],3.300,0,a[3],'middle')});
 s+=`<circle cx="${m(1288,0)[0]}" cy="${m(0,158)[1]}" r="1.300" fill="#c05080"/><circle cx="${m(1288,0)[0]}" cy="${m(0,235)[1]}" r="1.300" fill="${G}"/>`;
 s+=T(438.500,762,'Profit:',4.500,11,'#fff','start','font-weight="600"')+T(430,772.300,'+50%',10.800,27,G);
 s+=`<g transform="translate(72 797)">${bull(9.500,9)}</g><g transform="translate(72 808.500)">${bear(8.500,7)}</g>`;
 s+=`<rect x="84.500" y="909" width="15.500" height="16" fill="url(#bp)"/><rect x="150.500" y="909" width="15.500" height="16" fill="url(#bnr)"/><g transform="translate(218.500 907.500)">${bull(12,11)}</g><g transform="translate(291 908.500)">${bear(11,9.500)}</g>`;
 s+=line(m,'618,572 625,562 634,570 640,560 648,567 655,558 662,574 670,560 684,557',G,1)+line(m,'822,557 831,566 838,560 842,570 850,558 858,568 865,562 872,572 880,563 890,571',R,1);
 s+=fine(106.500,911.500,[['Lorem ipsum dolor sit amet,',26],['consectetur adipiscing elit. Fus',28.500],['eleifend nunc sit amet nisi a',27],['Mauris suscipit, efficitur',24],['Nunc non pellentesque loren',28],['Fusce id est velit, laoreet a',23]],2.700)+fine(172.500,911.500,[['Fusce vitae nibh nisl, in',24],['dignissim nulla blandit ac',25],['Lorem ut hendrerit',20],['Nullam ultrices congue eget',26],['Donec tristique velit nulla',23],['condimentum non nisl a, eros',26]],2.700)+fine(242.500,911.500,[['Quisque eleifend',16],['Condimentum lorem praesen',25],['tristique vel magna. Nullam id',29],['Morbi semper ut nisi',20],['dictum in pulvinar ullamcorper',24],['Proin blandit ac massa eget',24]],2.700)+fine(314,911.500,[['Mauris non purus efficitur',24],['justo nec pellentesque rutrum',28],['Fusce convallis mattis id',23],['Suspendisse sollicitudin ac',25],['Nullam vehicula arcu vel',23],['Nullam ultrices magna eget',26]],2.700);
 return `<svg width="515" height="198" viewBox="13 739 515 198"><defs><linearGradient id="bp" x2="0" y2="1"><stop stop-color="#6cf6ff"/><stop offset=".22" stop-color="#3f93d0"/><stop offset=".45" stop-color="#3d3aa0"/><stop offset=".75" stop-color="#2f2a7c"/><stop offset="1" stop-color="#181538"/></linearGradient><linearGradient id="bn" x2="0" y2="1"><stop stop-color="#1b1740"/><stop offset=".5" stop-color="#3e3a9a"/><stop offset="1" stop-color="#f09a78"/></linearGradient><linearGradient id="bnr" x2="0" y2="1"><stop stop-color="#f09a78"/><stop offset=".45" stop-color="#3e3a9a"/><stop offset="1" stop-color="#1b1740"/></linearGradient></defs>${s}</svg>`;
}
function chartB(){
 const m=mapper(2.904,530,735);let s='';const st=[408,400,386,348,333,370,378,360,333,333,335,343];
 st.forEach((y,i)=>{const a=m(247+i*91.500,y),b=m(0,425);s+=`<rect x="${a[0]}" y="${a[1]}" width="31.600" height="${(b[1]-a[1]).toFixed(1)}" fill="url(#vb)"/>`});
 [67,108,148,188,227,266,306,346,385,425].forEach((y,i)=>{const a=m(247,y);s+=`<path d="M${a[0]-3} ${a[1]}H993.300" stroke="#fff" stroke-opacity=".15"/>`;if(i<9)s+=T(610.500,a[1]+1.600,(9-i)*1000,4.300,8,'#fff','end','font-weight="600"')});
 for(let i=0;i<=12;i++){const a=m(247+i*91.500,67);s+=`<path d="M${a[0]} ${a[1]}V877" stroke="${i%2&&i>2?'#c8c8ff':'#fff'}" stroke-opacity="${[3,5,7,9,11,6,8].includes(i)?.3:.16}"/>`+T(a[0],886.200,(6+i)+':00',4.300,i<4?8:10,'#fff','middle','font-weight="600"')}
 const path=pairs('250,385 258,325 275,330 283,350 300,325 312,305 322,330 335,315 345,345 355,310 370,330 400,290 413,265 432,285 445,260 455,318 465,300 475,225 492,245 505,210 515,225 522,170 545,180 570,205 580,170 600,180 617,150 630,165 645,140 655,150 670,160 690,155 695,215 710,245 735,220 750,230 762,210 770,270 780,290 793,255 803,285 830,260 843,235 855,220 865,250 885,220 893,190 903,210 913,170 925,200 935,170 948,235 963,185 975,225 995,150 1015,165 1035,105 1060,160 1082,125 1105,150 1112,115 1130,155 1140,150 1150,160 1162,110 1182,90 1197,120 1205,105 1212,145 1225,130 1235,170 1250,165 1258,135 1275,185 1300,140 1313,180 1323,130 1340,120');
 const at=x=>{for(let i=1;i<path.length;i++)if(path[i][0]>=x){const a=path[i-1],b=path[i];return a[1]+(b[1]-a[1])*(x-a[0])/(b[0]-a[0])}return 120};
 let seed=7;const rnd=()=>(seed=(seed*16807)%2147483647)/2147483647;
 for(let x=251;x<1343;x+=8.150){const y0=at(x-4),y1=at(x+4),up=y1<y0+(rnd()-.5)*6;const t=Math.min(y0,y1)-2-rnd()*4,b=Math.max(y0,y1)+2+rnd()*4;const a=m(x,t),c=m(x,b),col=up?'#25a3cf':'#d27a5c';s+=`<path d="M${a[0]} ${(a[1]-1-rnd()*4).toFixed(1)}V${(c[1]+1+rnd()*4).toFixed(1)}" stroke="${col}" stroke-width=".7"/><path d="M${a[0]} ${a[1]}V${c[1]}" stroke="${col}" stroke-width="1.900"/>`}
 s+=line(m,'247,309 338,388 430,344 521,328 613,266 704,148 796,118 887,172 979,266 1070,227 1162,227 1253,307 1345,285','#8c2c3a',1);
 s+=line(m,'247,266 430,187 521,266 613,227 704,266 796,345 887,325 979,306 1070,266 1162,187 1253,108 1345,227','#278a63',1);
 s+=`<path d="M617 908.500L626.500 917.500 635.500 908.500" fill="none" stroke="#a82f38" stroke-width="1.200"/><path d="M699.500 908.500L709 917.500 717.500 908.500" fill="none" stroke="${G}" stroke-width="1.200"/><rect x="784.500" y="907" width="13.500" height="13" fill="url(#vs)"/><path d="M870 909V918.500" stroke="#d27a5c" stroke-width="2.800"/><path d="M870 907.500V920" stroke="#d27a5c" stroke-width=".8"/><path d="M946.500 909V918.500" stroke="#25a3cf" stroke-width="2.500"/><path d="M946.500 907.500V920" stroke="#25a3cf" stroke-width=".8"/>`;
 s+=fine(641.500,910.300,lor,2.700)+fine(721.500,910.300,lor,2.700)+fine(807,910.300,lor,2.700)+fine(879,910.300,lor,2.700)+fine(955,911.500,shortLor,2.800);
 return `<svg width="531" height="198" viewBox="533 739 531 198"><defs><linearGradient id="vb" x2="0" y2="1"><stop stop-color="#17164a"/><stop offset="1" stop-color="#191a60"/></linearGradient><linearGradient id="vs" x2="0" y2="1"><stop stop-color="#1c1a60"/><stop offset="1" stop-color="#2e4096"/></linearGradient></defs>${s}</svg>`;
}
function chartC(){
 const m=mapper(2.970,1060,735);let s='';
 for(let i=0;i<10;i++){const a=m(285,67+i*40.670);s+=`<path d="M${a}H1527" stroke="#fff" stroke-opacity=".11"/>`+T(1152.800,a[1]+2.100,(9-i)*1000,5.900,i==9?3.400:12.300,'#f0f0f6','end')}
 ['Jan','Feb','Mar','Apr','May','Jun','Jul','Aug','Sep','Oct','Nov','Dec'].forEach((t,i)=>{const a=m(296+i*99.100,67);s+=`<path d="M${a}V883" stroke="#fff" stroke-opacity=".15"/>`+T(a[0],893,t,5.600,[9,9,9.500,9,10.500,9,7,10.500,9.500,9,10,10][i],'#f0f0f6','middle')});
 const B=[[345,281,318,0,'860','2800',253,334],[444,210,291,0,'+1330','3400',182,309],[544,285,342,0,'-1630','2200',245,357],[641,222,269,0,'+1580','4000',197,287],[742,180,317,0,'+1270','2800',156,334],[840,261,342,0,'-1932','2200',237,357],[941,336,377,0,'-2100','1300',309,395],[1039,267,366,242,'+2400','1600',215,382],[1139,228,285,167,'+1860','3600',142,302],[1241,180,249,138,'+ 980','4400',117,267],[1338,132,219,100,'+1100','5200',77,235]];
 B.forEach(b=>{const x=m(b[0]-26,0)[0],y=v=>m(0,v)[1];const R_=(a,c,f)=>`<rect x="${x}" y="${y(a)}" width="17.300" height="${(y(c)-y(a)).toFixed(2)}" fill="url(#${f})"/>`;
  if(b[3])s+=R_(b[3],b[1],'cr');s+=R_(b[1],b[2],'cc')+R_(b[2],432,'cd');});
 for(let i=0;i<10;i++){const a=m(285,67+i*40.670);s+=`<path d="M${a}H1527" stroke="#fff" stroke-opacity=".05"/>`}
 s+=line(m,B.map(b=>b[0]+','+(b[3]||b[1])).join(' '),'#dcdce6',1.200);
 B.forEach(b=>{const q=m(b[0],b[3]||b[1]);s+=`<circle cx="${q[0]}" cy="${q[1]}" r="3.300" fill="#fff" fill-opacity=".5"/><circle cx="${q[0]}" cy="${q[1]}" r="2" fill="#fff"/>`;
  const t=m(b[0]-1,b[6]+5);s+=T(t[0],t[1],b[4],4.300,b[4].length*2.350,'#fff','middle','font-weight="600"')+arrowDot(t[0],t[1]-7.300,b[4][0]=='-'?'#d8452f':'#1fb5ae',.95);
  const u=m(b[0],b[7]+3);s+=T(u[0],u[1],b[5],3,6.500,'#fff','middle','font-weight="700"')});
 s+=`<rect x="1156.700" y="910.700" width="11.300" height="11" fill="url(#cd2)"/><rect x="1243" y="910.700" width="11.300" height="11" fill="url(#cc2)"/><rect x="1326.300" y="910.700" width="11.300" height="11" fill="url(#cr)"/>`+fine(1172,912.300,lor,2.700)+fine(1258,912.300,lor,2.700)+fine(1341.500,912.300,shortLor,2.800);
 const lg=(id,...c)=>`<linearGradient id="${id}" x2="0" y2="1">${c.map((k,i)=>`<stop offset="${i/(c.length-1)}" stop-color="${k}"/>`).join('')}</linearGradient>`;
 return `<svg width="502" height="198" viewBox="1069 739 502 198"><defs>${lg('cd','#27319a','#252b8e','#1e1a60')}${lg('cc','#2be6ff','#2db4f5','#2b62e6')}${lg('cr','#e8476c','#8a3054','#221a38')}${lg('cc2','#2b62e6','#2db4f5','#2be6ff')}${lg('cd2','#201b66','#1e2c5c')}</defs>${s}</svg>`;
}
customElements.define('analytics-row',class extends HTMLElement{
 connectedCallback(){this.attachShadow({mode:'open'}).innerHTML=`<style>${BASE}:host{display:flex;height:198px;width:1558px;background:#131221;overflow:hidden}hr{border:0;margin:12px 0 0;width:5px;height:174px;border-radius:2.500px;background:#222039;flex:none}</style>${chartA()}<hr>${chartB()}<hr>${chartC()}`}});

/* ---------- bottom cards ---------- */
const arc=(cx,cy,ri,ro,a0,a1,fill)=>{const P=(r,a)=>{a=(a-90)*Math.PI/180;return(cx+r*Math.cos(a)).toFixed(2)+' '+(cy+r*Math.sin(a)).toFixed(2)};const big=(a1-a0)>180?1:0;return`<path d="M${P(ri,a0)}L${P(ro,a0)}A${ro} ${ro} 0 ${big} 1 ${P(ro,a1)}L${P(ri,a1)}A${ri} ${ri} 0 ${big} 0 ${P(ri,a0)}z" fill="${fill}"/>`};
const grad=(id,c,x1=0,y1=0,x2=1,y2=1)=>`<linearGradient id="${id}" x1="${x1}" y1="${y1}" x2="${x2}" y2="${y2}">${c.map((k,i)=>`<stop offset="${i/(c.length-1)}" stop-color="${k}"/>`).join('')}</linearGradient>`;
const sh='style="filter:drop-shadow(0 0 2px #000)"';
customElements.define('share-card',class extends HTMLElement{
 connectedCallback(){const c=[90.700,1021];
  const L=[['Dolor sit',19,87,150,'d21','21%',122],['Consectetur',28,150,182,'#842a9c','10%',168],['Donec tortor',29,182,217,'#2a1f86','13%',199],['Nunc dapibus',31.500,217,272,'#2ea6e0','15%',246],['Phasellus nibh',32.500,272,332,'#0b86c4','17%',301],['Consectetur',28,332,362,'#e60cc8','10%',348],['Nunc',12.500,362,398,'#f04a28','14%',383]];
  this.attachShadow({mode:'open'}).innerHTML=`<style>${BASE}:host{display:flex}.leg{padding-top:21px}.leg div{display:flex;gap:3px}.leg b{width:15px;font-weight:400;display:flex;justify-content:center}</style>
  <svg width="178.800" height="146" viewBox="13 948 178.800 146"><defs>${grad('a1',['#0f9fd8','#1cc8ea','#12a5dc','#2fd0f0'],0,1,1,0)}${grad('a2',['#3156c8','#2796d6','#2fb4de'],0,0,0,1)}${grad('a3',['#ea10d8','#c812b4'],0,0,1,1)}${grad('a4',['#f86a22','#f03c2c'])}${grad('a5',['#e020f0','#a83df0','#4a5ae0'],0,0,0,1)}${grad('a6',['#7a2c9c','#b83cc0'],1,0,0,1)}${grad('a7',['#221c80','#2a2ab0'],1,0,0,1)}</defs>
  ${arc(...c,39,55.500,59,141,'url(#a5)')}<g ${sh}>${arc(...c,37,56,141,177,'url(#a6)')}${arc(...c,35,56,13.400,59,'url(#a4)')}${arc(...c,31,58,177,221,'url(#a7)')}${arc(...c,29,57.500,221,277,'url(#a2)')}</g><g ${sh}>${arc(...c,32,58,-26.800,13.400,'url(#a3)')}${arc(...c,27.500,60,277,333,'url(#a1)')}</g>
  ${T(57,999,'15%',9,16,'#fff','middle')}${T(88,980.500,'10%',8,13,'#fff','middle')}${T(117.500,987.500,'14%',7.500,12.500,'#fff','middle')}${T(138,1029.500,'21%',5,9,'#fff','middle')}${T(106.500,1067.500,'10%',8,12.500,'#fff','middle')}${T(75.500,1066.500,'13%',9,17,'#fff','middle')}${T(50,1038,'17%',9,17,'#fff','middle')}${T(91,1025,'5371',11.500,23,'#fff','middle')}
  <path d="M180 983.500Q173 983.500 173 987V1018Q173 1021 168 1022 173 1023 173 1026V1057Q173 1060.500 180 1060.500" fill="none" stroke="#c8c8d0" stroke-width="1"/></svg>
  <div class="leg">${L.map(l=>{const h=(l[3]-l[2])/3;return`<div style="height:${h.toFixed(2)}px;align-items:flex-start"><b style="height:100%;align-items:center;background:${l[4]=='d21'?'linear-gradient(160deg,#5a50d0,#9038e0,#c428ee)':l[4]}">${fit(l[5],6.500,3.800,5)}</b>${fit(l[0],l[1],6.200,8,`margin-top:${((l[6]-l[2])/3-3.700).toFixed(1)}px`)}</div>`}).join('')}</div>`}});
customElements.define('gauge-card',class extends HTMLElement{
 connectedCallback(){
  const gauge=(id,p)=>{const a=p*3.6,P=(r,d)=>{d=(d-90)*Math.PI/180;return(r*Math.cos(d)).toFixed(2)+' '+(r*Math.sin(d)).toFixed(2)};const s=`M${P(17.500,8)}A17.500 17.500 0 ${a>188?1:0} 1 ${P(17.500,a)}`;return`<svg width="42" height="42" viewBox="-21 -21 42 42"><defs>${grad(id,['#22b2ea','#0c78c0'],0,1,1,0)}</defs><circle r="20.500" fill="url(#${id})"/><path d="${s}" fill="none" stroke="#0a5f96" stroke-width="6.600" stroke-linecap="round"/><path d="${s}" fill="none" stroke="#06f2ff" stroke-width="5.200" stroke-linecap="round"/>${T(0,3,p+'%',8.500,14.500,'#0ee6f8','middle')}</svg>`};
  const D=[[60,[['Lorem ipsum dolor',47],['sit amet, consectetur',52],['adipiscing elit.',36]],5.500],[46,[['Vivamus quam',37],['mi, condimentum',44],['nec lacus non',34]],5.500],[90,[['Fusce vitae varius',44],['diam.  Etiam non',42],['arcu vel tortor',36],['vulputate pulvinar',46]],5.500],[75,[['Sed porta',25.500],['euismod mi,',31],['sit amet tempus',40],['odio blandit et.',38]],7]];
  this.attachShadow({mode:'open'}).innerHTML=`<style>${BASE}:host{display:grid;grid-template-columns:120.800px auto;grid-auto-rows:42px;row-gap:17.700px;padding:22px 0 0 17.300px;align-content:start}.c{display:flex;align-items:center}</style>${D.map((d,i)=>`<div class="c">${gauge('q'+i,d[0])}<div style="margin-left:${d[2]}px">${d[1].map(l=>fit(l[0],l[1],6.400,7.250)).join('')}</div></div>`).join('')}`}});
customElements.define('budget-card',class extends HTMLElement{
 connectedCallback(){const c=[605.500,1021];
  const L=[['Dolor sit',37,'#1155a5'],['Consectetur',53,'#29dcb4'],['Donec tortor',56.500,'#f5558d'],['Nunc dapibus',60.500,'#fdb05c'],['Phasellus nibh',63,'#2f3c52']];
  this.attachShadow({mode:'open'}).innerHTML=`<style>${BASE}:host{display:flex}.leg{padding-top:23.400px}.leg div{display:flex;gap:5.700px;align-items:center;height:18.800px}.leg i{width:12.400px;height:12.400px;border-radius:50%}</style>
  <svg width="150.500" height="146" viewBox="537.300 948 150.500 146">${arc(...c,31,52.800,38.500,192,'#2f3c52')}<g ${sh}>${arc(...c,31.500,53,192,264,'#fdb05c')}${arc(...c,32,52,264,286,'#f5558d')}${arc(...c,31,52,353,398.500,'#29dcb4')}</g><g ${sh}>${arc(...c,26.500,57.500,285,350,'#1155a5')}</g>
  ${T(578,993.500,'18%',8,12.500,'#fff','middle')}${T(617,985.300,'12%',8,12.500,'#fff','middle')}${T(643.500,1041.800,'41%',8,12.500,'#fff','middle')}${T(573.500,1052.800,'22%',8,12.500,'#fff','middle')}${T(562.500,1021,'7%',8,8.500,'#fff','middle')}${T(605.700,1023,'11.600$',9.300,28,'#fff','middle')}${T(605.700,1029,'(100%)',4,12,'#77778a','middle')}</svg>
  <div class="leg">${L.map(l=>`<div><i style="background:${l[2]}"></i>${fit(l[0],l[1],10.500,14)}</div>`).join('')}</div>`}});

const CC={
trx:{x0:799.6,gw:135.800,logo:'TRX',nx:994,names:[['TRX',26],['TRON',39]],sp:[1.965,790,940,285,222,195,80,'295,273 318,240 341,272 359,240 378,240 404,292 411,264 450,255 466,231'],an:['bull',938.800,1054,25,25.500],px:990.500,pb:1059.500,pr:[['$ 0.022',26],[g('+1.83%')+' 12 h',45],[g('+19.6%')+' 7 d',42]]},
xlm:{x0:1061.7,gw:126.400,logo:'XLM',nx:1247,names:[['XLM',31],['Stellar',44]],sp:[1.965,790,940,780,225,215,95,'792,278 804,260 818,278 851,250 863,268 879,234 901,248 915,272 922,250 944,282 962,289 983,310'],an:['bear',1198.500,1060.300,23.500,20],px:1249,pb:1061.500,pr:[['$ 0.084',26],[r('-0.74%')+' 12 h',42],[r('-6.68%')+' 7 d',38.500]]},
iot:{x0:1323.8,gw:142.700,logo:'IOT',nx:1522.800,names:[['IOT',22.500],['IOTA',31]],sp:[1.965,790,940,1300,235,200,80,'1311,273 1335,255 1366,275 1396,264 1403,248 1414,302 1444,263 1453,275 1471,252 1479,285 1488,290'],an:['bear',1463.800,1056,23.500,20],px:1514.200,pb:1061.500,pr:[['$ 0.285',26],[r('-1.04%')+' 12 h',42],[r('-8.7%')+' 7 d',34]]}};
const GR={
trx(){let s='';for(let i=0;i<=160;i++){const a=i/160*6.2832,rr=44.500+5*Math.cos(8*a-.5);s+=(i?'L':'M')+(870.400+rr*Math.cos(a)).toFixed(1)+' '+(1021.300+rr*1.060*Math.sin(a)).toFixed(1)}
 return `<defs><linearGradient id="gl" x1="0" x2="1"><stop offset="0" stop-color="#19ffe0"/><stop offset=".2" stop-color="#16e4f2"/><stop offset=".33" stop-color="#1858f4"/><stop offset=".5" stop-color="#1a38d0"/><stop offset=".68" stop-color="#1c1c80"/><stop offset=".85" stop-color="#1d1450"/><stop offset="1" stop-color="#151130"/></linearGradient><filter id="bl" x="-30%" y="-30%" width="160%" height="160%"><feGaussianBlur stdDeviation="4.300"/></filter></defs><path d="${s}z" fill="url(#gl)" filter="url(#bl)"/><circle cx="870.400" cy="1021.300" r="35" fill="#131221"/><g stroke="#19d0d8" fill="none" stroke-width="1"><circle cx="870" cy="1009" r="5"/><path d="M867.800 1011.200L872 1007M868.800 1006.800H872.200V1010.200"/></g>${T(870.400,1028,'+2400',12,31,'#fff','middle')}`},
xlm(){const x=1117.700,y=1023.700;return `<defs>${grad('w1',['#0fa8dc','#08e0f0','#0ae8f4'],0,1,0,0)}${grad('w2',['#08f4f8','#0aa0c8'],0,0,1,1)}${grad('rg',['#2c98d8','#1070b8'])}<clipPath id="k1"><circle cx="${x}" cy="${y}" r="37.800"/></clipPath></defs><circle cx="${x}" cy="${y}" r="41" fill="#12112a" stroke="url(#rg)" stroke-width="3.200"/><g clip-path="url(#k1)"><rect x="1078" y="984" width="80" height="80" fill="#343356"/><path d="M1078 1020Q1088 1017 1098 1021T1118 1024Q1126 1022 1132 1018L1122 1062H1078z" fill="url(#w2)"/><path d="M1078 1039Q1098 1045 1112 1032 1124 1020 1133 1017 1146 1013 1158 1016V1064H1078z" fill="url(#w1)"/><path d="M1078 1039Q1098 1045 1112 1032 1098 1036 1078 1026z" fill="#0aa4d0" opacity=".7"/></g>${T(1118,1010.700,'561',13.800,21.500,'#0cb4e8','middle')}`},
iot(){const x=1379.800,y=1021.300;return `<defs>${grad('v1',['#0ad0ee','#08d8ee','#0cb4dc'],0,0,0,1)}${grad('v2',['#04fafa','#08b8d8'])}${grad('rh',['#3498dc','#1272c0'])}<clipPath id="k2"><circle cx="${x}" cy="${y}" r="41.500"/></clipPath></defs><g clip-path="url(#k2)"><rect x="1336" y="978" width="88" height="88" fill="#343356"/><path d="M1336 1010Q1352 1004 1364 1012 1376 1022 1384 1020V1066H1336z" fill="url(#v2)"/><path d="M1336 1019Q1352 1026 1372 1023 1384 1020 1394 1016 1408 1012 1424 1016V1066H1336z" fill="url(#v1)"/></g><circle cx="${x}" cy="${y}" r="42.500" fill="none" stroke="url(#rh)" stroke-width="3"/>${T(1379.800,1010.900,'163',16.800,27,'#0cb8ec','middle')}`}};
customElements.define('coin-card',class extends HTMLElement{
 connectedCallback(){const k=this.getAttribute('coin'),d=CC[k],xl=d.x0+d.gw;
  const sl=d.sp[1]+d.sp[3]/d.sp[0],sy=940+d.sp[4]/3,sh_=d.sp[6]/3;
  this.attachShadow({mode:'open'}).innerHTML=`<style>${BASE}:host{display:flex;overflow:hidden}.h,.f{display:flex;align-items:flex-start}.h{height:56px}.logo{filter:drop-shadow(0 0 1.500px rgba(120,120,220,.5))}</style>
  <svg width="${d.gw}" height="146" viewBox="${d.x0} 948 ${d.gw} 146">${GR[k]()}</svg>
  <div><div class="h"><div style="margin-top:21px">${logo(d.logo,15)}</div><div style="margin:${top_(980,948,16.500,20)}px 0 0 ${(d.nx-xl-30).toFixed(1)}px">${d.names.map(n=>fit(n[0],n[1],16.500,20)).join('')}</div></div>
  ${spark(d.sp,d.an[0]=='bull'?G:R,2,`margin:${(sy-1004).toFixed(1)}px 0 0 ${(sl-xl).toFixed(1)}px`)}
  <div class="f"><div style="margin:${(d.an[2]-sy-sh_).toFixed(1)}px 0 0 ${(d.an[1]-xl).toFixed(1)}px">${animal(d.an[0],d.an[3],d.an[4])}</div><div style="margin:${top_(d.pb,sy+sh_,9.300,10.500)}px 0 0 ${(d.px-d.an[1]-d.an[3]).toFixed(1)}px">${d.pr.map(p=>fit(p[0],p[1],9.300,10.500)).join('')}</div></div></div>`}});

customElements.define('trading-app',class extends HTMLElement{
 connectedCallback(){this.attachShadow({mode:'open'}).innerHTML=`<style>${BASE}
 :host{display:block;padding-top:88px}
 .app{height:1015px;background:#343356;overflow:hidden;box-shadow:inset 1px 0 #8f8fa6}
 .mid{display:flex;gap:13.500px;padding:11px 0 0 13.300px}
 analytics-row{margin:13px 0 0 13.300px}
 .cards{display:grid;grid-template-columns:repeat(6,247.600px);column-gap:14.500px;margin:11px 0 0 13.300px}.cards>*{height:146px;background:#131221}</style>
 <div class="app"><top-bar></top-bar><ticker-strip></ticker-strip>
 <div class="mid"><main-panel></main-panel><coin-list></coin-list></div>
 <analytics-row></analytics-row>
 <div class="cards"><share-card></share-card><gauge-card></gauge-card><budget-card></budget-card><coin-card coin="trx"></coin-card><coin-card coin="xlm"></coin-card><coin-card coin="iot"></coin-card></div></div>`}});
</script>
</body>
</html>
